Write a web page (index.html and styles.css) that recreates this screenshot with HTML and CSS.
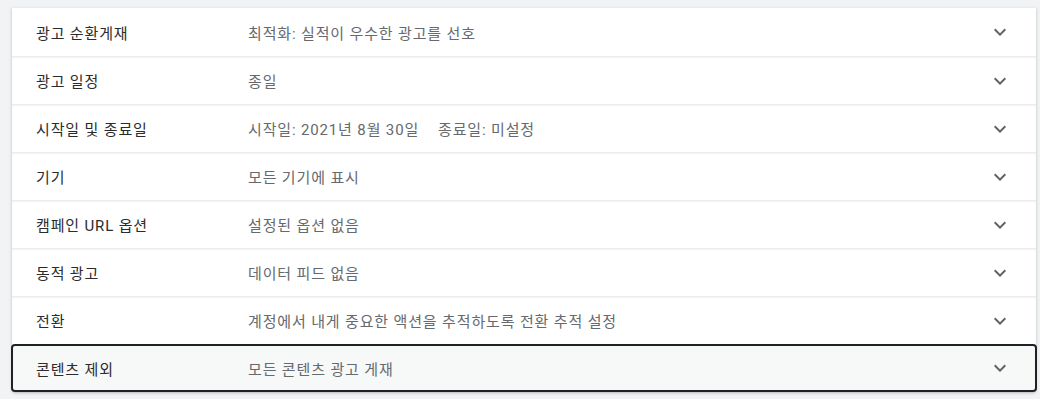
FILE: index.html
```html
<!DOCTYPE html>
<html lang="ko">
<head>
<meta charset="utf-8">
<link rel="stylesheet" href="styles.css">
</head>
<body>
<div class="card">
  <div class="row"><div class="label">광고 순환게재</div><div class="value">최적화: 실적이 우수한 광고를 선호</div><svg class="chev" viewBox="0 0 24 24"><path d="M16.59 8.59L12 13.17 7.41 8.59 6 10l6 6 6-6z"/></svg></div>
  <div class="row"><div class="label">광고 일정</div><div class="value">종일</div><svg class="chev" viewBox="0 0 24 24"><path d="M16.59 8.59L12 13.17 7.41 8.59 6 10l6 6 6-6z"/></svg></div>
  <div class="row"><div class="label">시작일 및 종료일</div><div class="value"><span class="part">시작일: 2021년 8월 30일</span><span>종료일: 미설정</span></div><svg class="chev" viewBox="0 0 24 24"><path d="M16.59 8.59L12 13.17 7.41 8.59 6 10l6 6 6-6z"/></svg></div>
  <div class="row"><div class="label">기기</div><div class="value">모든 기기에 표시</div><svg class="chev" viewBox="0 0 24 24"><path d="M16.59 8.59L12 13.17 7.41 8.59 6 10l6 6 6-6z"/></svg></div>
  <div class="row"><div class="label">캠페인 URL 옵션</div><div class="value">설정된 옵션 없음</div><svg class="chev" viewBox="0 0 24 24"><path d="M16.59 8.59L12 13.17 7.41 8.59 6 10l6 6 6-6z"/></svg></div>
  <div class="row"><div class="label">동적 광고</div><div class="value">데이터 피드 없음</div><svg class="chev" viewBox="0 0 24 24"><path d="M16.59 8.59L12 13.17 7.41 8.59 6 10l6 6 6-6z"/></svg></div>
  <div class="row"><div class="label">전환</div><div class="value">계정에서 내게 중요한 액션을 추적하도록 전환 추적 설정</div><svg class="chev" viewBox="0 0 24 24"><path d="M16.59 8.59L12 13.17 7.41 8.59 6 10l6 6 6-6z"/></svg></div>
  <div class="row focused"><div class="label">콘텐츠 제외</div><div class="value">모든 콘텐츠 광고 게재</div><svg class="chev" viewBox="0 0 24 24"><path d="M16.59 8.59L12 13.17 7.41 8.59 6 10l6 6 6-6z"/></svg></div>
</div>
</body>
</html>
```
FILE: styles.css
```css
html, body {
  margin: 0;
  height: 100%;
}
body {
  background: #f1f3f4;
  padding: 8px 4px 0 12px;
  box-sizing: border-box;
  font-family: Roboto, "Noto Sans CJK KR", sans-serif;
  font-size: 15px;
  letter-spacing: 0.85px;
}
.card {
  width: 1024px;
  background: #fff;
  box-shadow: 0 1px 2px rgba(60,64,67,0.2), 0 1px 3px 1px rgba(60,64,67,0.1);
  border-radius: 0 0 4px 4px;
}
.row {
  height: 48px;
  display: flex;
  align-items: center;
  padding: 0 24px;
  box-sizing: border-box;
  border-top: 1px solid #ebebeb;
  box-shadow: inset 0 1px 2px rgba(60,64,67,0.06);
}
.row:first-child {
  border-top: none;
  box-shadow: none;
}
.label {
  width: 212px;
  flex: none;
  color: #2a2b2e;
}
.value {
  flex: 1;
  color: #66696d;
}
.part {
  margin-right: 19px;
}
.chev {
  width: 24px;
  height: 24px;
  fill: #5f6368;
  flex: none;
}
.row.focused {
  margin: 0 -1px;
  padding: 0 23px 0 23px;
  border: 2px solid #202124;
  border-radius: 4px;
  background: #f7f8f8;
  box-shadow: none;
}
```
